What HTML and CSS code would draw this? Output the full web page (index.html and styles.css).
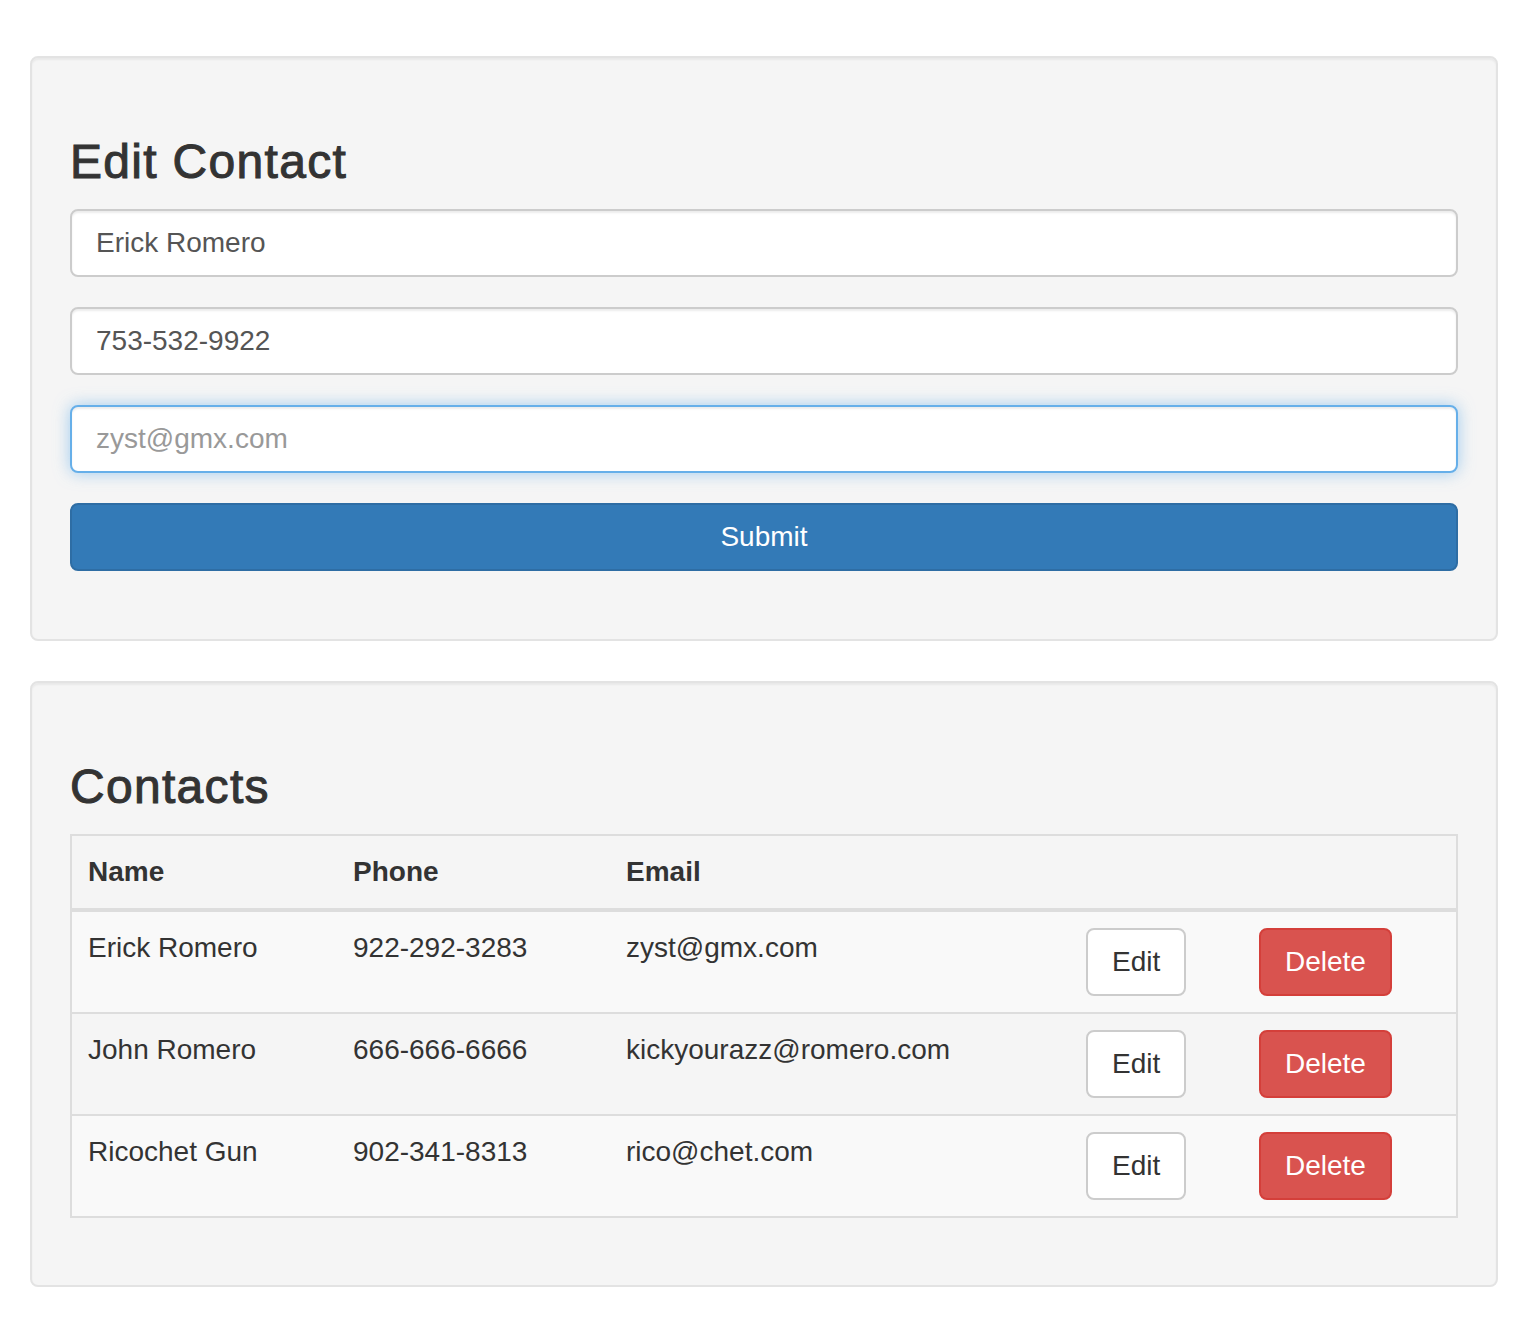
FILE: index.html
```html
<!DOCTYPE html>
<html lang="en">
<head>
<meta charset="utf-8">
<title>Contacts</title>
<link rel="stylesheet" href="styles.css">
</head>
<body>
<div class="page">
  <section class="well">
    <h3 class="title">Edit Contact</h3>
    <form class="form">
      <input class="input" type="text" value="Erick Romero">
      <input class="input" type="text" value="753-532-9922">
      <input class="input is-focus" type="text" placeholder="zyst@gmx.com">
      <button class="btn btn-primary btn-block" type="button">Submit</button>
    </form>
  </section>

  <section class="well">
    <h3 class="title">Contacts</h3>
    <table class="table">
      <thead>
        <tr>
          <th class="col-name">Name</th>
          <th class="col-phone">Phone</th>
          <th class="col-email">Email</th>
          <th class="col-edit"></th>
          <th class="col-delete"></th>
        </tr>
      </thead>
      <tbody>
        <tr class="striped">
          <td>Erick Romero</td>
          <td>922-292-3283</td>
          <td>zyst@gmx.com</td>
          <td><button class="btn btn-default" type="button">Edit</button></td>
          <td><button class="btn btn-danger" type="button">Delete</button></td>
        </tr>
        <tr>
          <td>John Romero</td>
          <td>666-666-6666</td>
          <td>kickyourazz@romero.com</td>
          <td><button class="btn btn-default" type="button">Edit</button></td>
          <td><button class="btn btn-danger" type="button">Delete</button></td>
        </tr>
        <tr class="striped">
          <td>Ricochet Gun</td>
          <td>902-341-8313</td>
          <td>rico@chet.com</td>
          <td><button class="btn btn-default" type="button">Edit</button></td>
          <td><button class="btn btn-danger" type="button">Delete</button></td>
        </tr>
      </tbody>
    </table>
  </section>
</div>
</body>
</html>
```

FILE: styles.css
```css
* {
  box-sizing: border-box;
}

html, body {
  margin: 0;
  padding: 0;
  background: #fff;
}

body {
  font-family: "Liberation Sans", Arial, Helvetica, sans-serif;
  font-size: 28px;
  line-height: 40px;
  color: #333;
}

.page {
  padding: 56px 30px 40px;
  display: flex;
  flex-direction: column;
  gap: 40px;
}

.well {
  background: #f5f5f5;
  border: 2px solid #e3e3e3;
  border-radius: 8px;
  box-shadow: inset 0 2px 2px rgba(0, 0, 0, 0.05);
  padding: 38px;
}

.title {
  margin: 40px 0 20px;
  font-size: 48px;
  line-height: 52.8px;
  font-weight: 400;
  letter-spacing: 1.3px;
  -webkit-text-stroke: 1px #333;
  color: #333;
}

.form {
  display: flex;
  flex-direction: column;
  gap: 30px;
  margin: 0 0 30px;
}

.input {
  display: block;
  width: 100%;
  height: 68px;
  padding: 12px 24px;
  font-family: inherit;
  font-size: 28px;
  line-height: 40px;
  color: #555;
  background: #fff;
  border: 2px solid #ccc;
  border-radius: 8px;
  box-shadow: inset 0 2px 2px rgba(0, 0, 0, 0.075);
  outline: none;
}

.input::placeholder {
  color: #999;
  opacity: 1;
}

.input.is-focus {
  border-color: #66afe9;
  box-shadow: inset 0 2px 2px rgba(0, 0, 0, 0.075), 0 0 16px rgba(102, 175, 233, 0.6);
}

.btn {
  display: inline-block;
  vertical-align: top;
  height: 68px;
  padding: 12px 24px;
  font-family: inherit;
  font-size: 28px;
  line-height: 40px;
  font-weight: 400;
  text-align: center;
  border: 2px solid transparent;
  border-radius: 8px;
  cursor: pointer;
}

.btn-block {
  display: block;
  width: 100%;
}

.btn-primary {
  color: #fff;
  background: #337ab7;
  border-color: #2e6da4;
}

.btn-default {
  color: #333;
  background: #fff;
  border-color: #ccc;
}

.btn-danger {
  color: #fff;
  background: #d9534f;
  border-color: #d43f3a;
}

.table {
  width: 100%;
  table-layout: fixed;
  border-collapse: separate;
  border-spacing: 0;
  border: 2px solid #ddd;
  margin: 0 0 29px;
}

.table th,
.table td {
  padding: 16px;
  text-align: left;
  vertical-align: top;
  line-height: 40px;
  white-space: nowrap;
}

.table th {
  font-weight: 700;
  border-bottom: 4px solid #ddd;
}

.table td {
  border-top: 2px solid #ddd;
}

.table tbody tr:first-child td {
  border-top: 0;
}

.table .striped td {
  background: #f9f9f9;
}

.col-name { width: 265px; }
.col-phone { width: 273px; }
.col-email { width: 460px; }
.col-edit { width: 173px; }
.col-delete { width: 213px; }
```
